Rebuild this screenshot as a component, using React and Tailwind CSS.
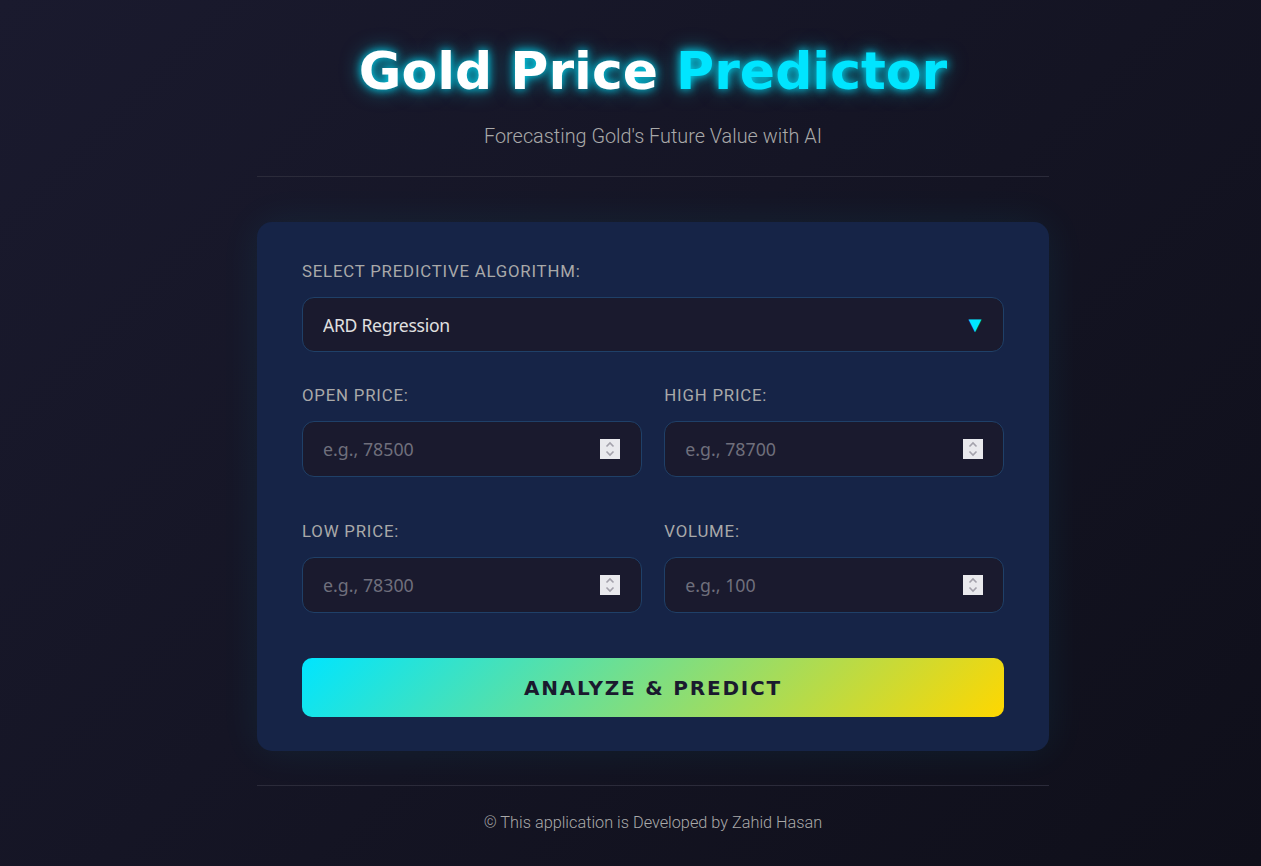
const labelCls = "block mb-[16px] text-[16.8px] leading-[20px] tracking-[0.8px] text-[#a9a9a9] font-['Roboto',sans-serif] uppercase";
const fieldCls = "w-full pl-[20px] pr-[20px] rounded-[12px] border border-[#1f4068] bg-[#1a1a2e] text-[#e0e0e0] font-['Noto_Sans',sans-serif] outline-none";

function PriceField({ label, placeholder }) {
  return (
    <div className="mb-[44px]">
      <label className={labelCls}>{label}</label>
      <div className="relative">
        <input
          type="number"
          placeholder={placeholder}
          className={`${fieldCls} h-[56px] text-[17.8px] placeholder:text-[#6f6f7c] appearance-none [&::-webkit-inner-spin-button]:appearance-none`}
        />
        <span className="absolute right-[21.4px] top-[18px] w-[20px] h-[20px] bg-[#e9e9ed] pointer-events-none">
          <svg viewBox="0 0 20 20" className="w-[20px] h-[20px]" fill="none" stroke="#a3a1ab" strokeWidth="1.6">
            <path d="M6.5 7.5 10 4l3.5 3.5" />
            <path d="M6.5 12.5 10 16l3.5-3.5" />
          </svg>
        </span>
      </div>
    </div>
  );
}

export default function App() {
  return (
    <div className="min-h-[866px] bg-[linear-gradient(135deg,#1a1a2e,#0f0f1a)] pl-[257px]">
      <div className="w-[792px]">
        <header className="pt-[36px] pb-[27px] border-b border-[#2b2b3a] text-center">
          <h1 className="text-[52px] leading-[70px] font-bold text-white font-['DejaVu_Sans',sans-serif] [text-shadow:0_0_10px_#00e5ff,0_0_20px_rgba(0,229,255,0.5)]">
            Gold Price <span className="text-[#00e5ff]">Predictor</span>
          </h1>
          <p className="mt-[19px] text-[19.85px] leading-[24px] font-light text-[#a9a9a9] font-['Roboto',sans-serif]">
            Forecasting Gold's Future Value with AI
          </p>
        </header>

        <form className="mt-[45px] px-[45px] pt-[39px] pb-[34px] rounded-[15px] bg-[#162447] shadow-[0_0_40px_rgba(0,229,255,0.07)]">
          <div className="mb-[33px]">
            <label className={labelCls}>Select Predictive Algorithm:</label>
            <div className="relative">
              <select className={`${fieldCls} h-[55px] pt-[2px] text-[17.6px] tracking-[-0.3px] appearance-none`} defaultValue="ard">
                <option value="ard">ARD Regression</option>
              </select>
              <span className="absolute right-[18px] top-[15px] text-[#00e5ff] text-[22px] leading-[22px] pointer-events-none">▼</span>
            </div>
          </div>
          <div className="grid grid-cols-2 gap-x-[22.6px]">
            <PriceField label="Open Price:" placeholder="e.g., 78500" />
            <PriceField label="High Price:" placeholder="e.g., 78700" />
            <PriceField label="Low Price:" placeholder="e.g., 78300" />
            <PriceField label="Volume:" placeholder="e.g., 100" />
          </div>
          <button type="button" className="w-full h-[59px] mt-[1px] rounded-[10px] bg-[linear-gradient(135deg,#00e5ff,#ffd700)] text-[#1a1a2e] text-[20px] font-bold tracking-[1.8px] font-['DejaVu_Sans',sans-serif] uppercase">
            Analyze &amp; Predict
          </button>
        </form>

        <footer className="mt-[34px] pt-[26px] border-t border-[#2b2b3a] text-center text-[16.3px] leading-[22px] font-light text-[#a9a9a9] font-['Roboto',sans-serif]">
          © This application is Developed by Zahid Hasan
        </footer>
      </div>
    </div>
  );
}
